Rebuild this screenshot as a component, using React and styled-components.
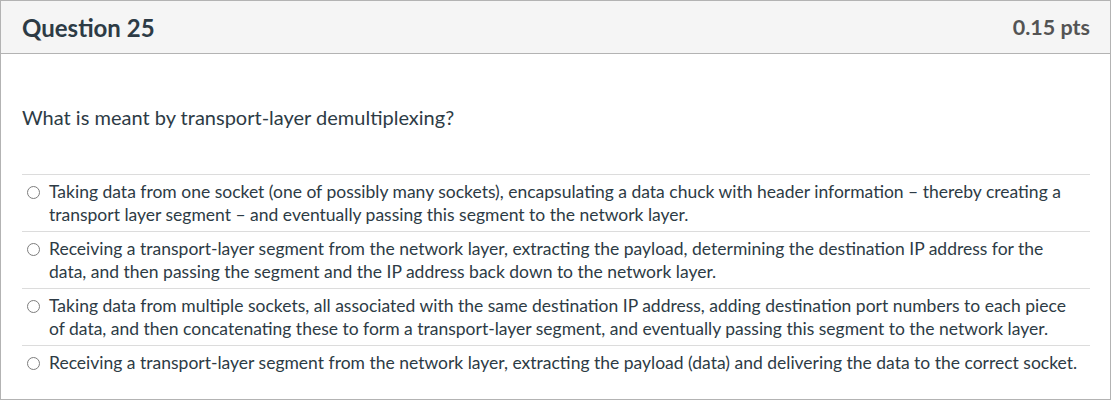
import React from 'react'
import styled, { createGlobalStyle } from 'styled-components'

const GlobalStyle = createGlobalStyle`
    body {
        margin: 0;
        background: #ffffff;
        font-family: 'Lato', 'Open Sans', sans-serif;
    }
`;

const Card = styled.div`
    width: 1111px;
    height: 400px;
    box-sizing: border-box;
    border: 1px solid #b3b3b3;
    background: #ffffff;
    color: #2d3b45;
`;

const Header = styled.div`
    display: flex;
    justify-content: space-between;
    align-items: center;
    height: 52px;
    padding: 0 20px 0 21px;
    background: #f5f5f5;
    border-bottom: 1px solid #b3b3b3;
`;

const Title = styled.div`
    font-size: 24px;
    font-weight: 700;
    color: #2d3b45;
`;

const Points = styled.div`
    font-size: 21.5px;
    font-weight: 700;
    color: #545454;
`;

const Body = styled.div`
    padding: 48px 20px 0 21px;
`;

const Prompt = styled.p`
    margin: 0 0 42px;
    font-size: 20px;
    line-height: 30px;
`;

const Answers = styled.div`
    display: flex;
    flex-direction: column;
`;

const Answer = styled.label`
    display: flex;
    align-items: flex-start;
    gap: 9px;
    padding: 5px 11px 5px 5px;
    border-top: 1px solid #dcdcdc;
    font-size: 17.5px;
    line-height: 23px;
`;

const Radio = styled.span`
    flex: none;
    width: 11px;
    height: 11px;
    margin-top: 6px;
    border: 1px solid #7d7d7d;
    border-radius: 50%;
    background: #ffffff;
`;

const answers = [
    'Taking data from one socket (one of possibly many sockets), encapsulating a data chuck with header information \u2013 thereby creating a transport layer segment \u2013 and eventually passing this segment to the network layer.',
    'Receiving a transport-layer segment from the network layer, extracting the payload, determining the destination IP address for the data, and then passing the segment and the IP address back down to the network layer.',
    'Taking data from multiple sockets, all associated with the same destination IP address, adding destination port numbers to each piece of data, and then concatenating these to form a transport-layer segment, and eventually passing this segment to the network layer.',
    'Receiving a transport-layer segment from the network layer, extracting the payload (data) and delivering the data to the correct socket.',
];

const App = () => {
    return (
        <>
            <GlobalStyle />
            <Card>
                <Header>
                    <Title>Question 25</Title>
                    <Points>0.15 pts</Points>
                </Header>
                <Body>
                    <Prompt>What is meant by transport-layer demultiplexing?</Prompt>
                    <Answers>
                        {answers.map((text) => (
                            <Answer key={text}>
                                <Radio />
                                <span>{text}</span>
                            </Answer>
                        ))}
                    </Answers>
                </Body>
            </Card>
        </>
    )
}

export default App
